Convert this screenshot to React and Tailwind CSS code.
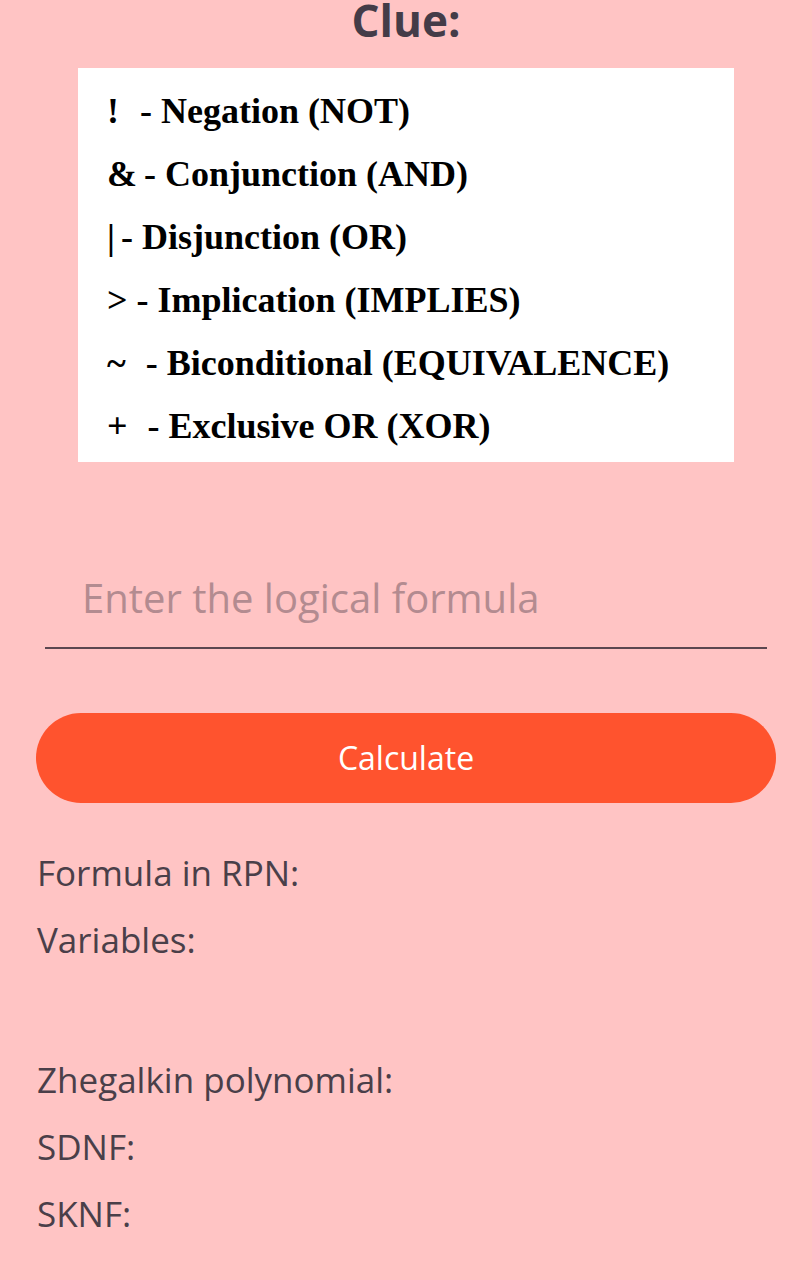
import React, { useState } from 'react';

const clues = [
  { sym: '!', gap: 'w-[21px]', text: '- Negation (NOT)' },
  { sym: '&', gap: 'w-[7px]', text: '- Conjunction (AND)' },
  { sym: '|', gap: 'w-[6px]', text: '- Disjunction (OR)' },
  { sym: '>', gap: 'w-[9px]', text: '- Implication (IMPLIES)' },
  { sym: '~', gap: 'w-[20px]', text: '- Biconditional (EQUIVALENCE)' },
  { sym: '+', gap: 'w-[20px]', text: '- Exclusive OR (XOR)' },
];

const results = ['Formula in RPN:', 'Variables:', '', 'Zhegalkin polynomial:', 'SDNF:', 'SKNF:'];

const App = () => {
  const [formula, setFormula] = useState('');

  return (
    <div className="min-h-[1280px] w-[812px] bg-[#ffc4c4] font-['Open_Sans',sans-serif] text-[#4a3f49] overflow-hidden">
      <h1 className="text-center text-[44px] font-bold leading-[44px] -mt-[2px] text-[#443c48]">Clue:</h1>

      <div className="mx-[78px] mt-[26px] h-[394px] bg-white pl-[29px] pt-[11px] font-['Liberation_Serif',serif] text-black">
        {clues.map((c) => (
          <div key={c.sym} className="flex h-[63px] items-center text-[36px] font-bold leading-none">
            <span>{c.sym}</span>
            <span className={c.gap}></span>
            <span className="whitespace-nowrap">{c.text}</span>
          </div>
        ))}
      </div>

      <div className="mx-[45px] mt-[100px] border-b-2 border-[#5b4750]">
        <input
          type="text"
          value={formula}
          onChange={(e) => setFormula(e.target.value)}
          placeholder="Enter the logical formula"
          className="w-full h-[85px] bg-transparent pl-[37px] pb-[14px] text-[40px] text-[#4a3f49] placeholder:text-[#b38b90] outline-none"
        />
      </div>

      <button className="mx-[36px] mt-[64px] h-[90px] w-[740px] rounded-full bg-[#ff532e] text-[32px] font-medium text-white">
        Calculate
      </button>

      <div className="mt-[36px] px-[37px]">
        {results.map((r, i) => (
          <p key={i} className={`${r ? 'h-[67px]' : 'h-[73px]'} text-[35px] leading-[67px] whitespace-nowrap`}>{r}</p>
        ))}
      </div>
    </div>
  );
};

export default App;
